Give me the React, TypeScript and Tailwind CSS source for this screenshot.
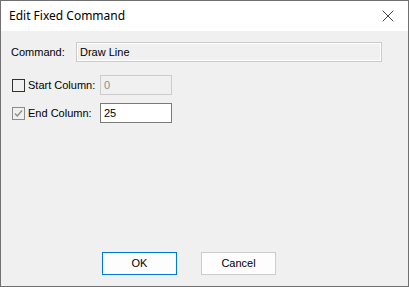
import { X } from 'lucide-react'

function CheckBox({ checked }: { checked?: boolean }) {
  return (
    <div
      className={`w-[13px] h-[13px] border flex items-center justify-center bg-[#f0f0f0] ${
        checked ? 'border-[#8c8c8c]' : 'border-[#333333]'
      }`}
    >
      {checked && (
        <svg width="9" height="9" viewBox="0 0 9 9">
          <path d="M1 4.5 L3.3 7 L8 1.5" fill="none" stroke="#8c8c8c" strokeWidth="1.3" />
        </svg>
      )}
    </div>
  )
}

export default function App() {
  return (
    <div className="w-[409px] h-[287px] border border-[#707070] flex flex-col bg-white font-['Liberation_Sans',Arial,sans-serif]">
      {/* Title bar */}
      <div className="h-[30px] bg-white flex items-center justify-between">
        <span className="pl-[8px] text-[12px] text-black font-['Noto_Sans','Open_Sans',sans-serif]">
          Edit Fixed Command
        </span>
        <div className="w-[40px] h-[30px] flex items-center justify-center">
          <X size={20} strokeWidth={0.9} color="#000000" />
        </div>
      </div>

      {/* Client area */}
      <div className="flex-1 bg-[#f0f0f0] flex flex-col text-[11px] text-black">
        <div className="mt-[11px] flex items-center h-[20px]">
          <span className="pl-[10px] w-[75px]">Command:</span>
          <div className="w-[306px] h-[20px] border border-[#cbcbcb] bg-[#f0f0f0] flex items-center pl-[3px] shadow-[inset_1px_1px_0_#ffffff,inset_-1px_-1px_0_#ffffff]">
            Draw Line
          </div>
        </div>

        <div className="mt-[13px] flex items-center h-[20px]">
          <div className="pl-[11px] flex items-center w-[99px]">
            <CheckBox />
            <span className="ml-[3px]">Start Column:</span>
          </div>
          <div className="w-[72px] h-[20px] border border-[#cccccc] bg-[#f0f0f0] flex items-center pl-[3px] text-[#8d8d8d]">
            0
          </div>
        </div>

        <div className="mt-[8px] flex items-center h-[20px]">
          <div className="pl-[11px] flex items-center w-[99px]">
            <CheckBox checked />
            <span className="ml-[3px]">End Column:</span>
          </div>
          <div className="w-[72px] h-[20px] border border-[#7a7a7a] bg-white flex items-center pl-[3px]">
            25
          </div>
        </div>

        <div className="mt-auto mb-[11px] flex gap-[24px] pl-[101px]">
          <button className="w-[75px] h-[23px] border border-[#0078d7] bg-[#fdfdfd] text-[11px]">
            OK
          </button>
          <button className="w-[75px] h-[23px] border border-[#cccccc] bg-[#fdfdfd] text-[11px]">
            Cancel
          </button>
        </div>
      </div>
    </div>
  )
}
